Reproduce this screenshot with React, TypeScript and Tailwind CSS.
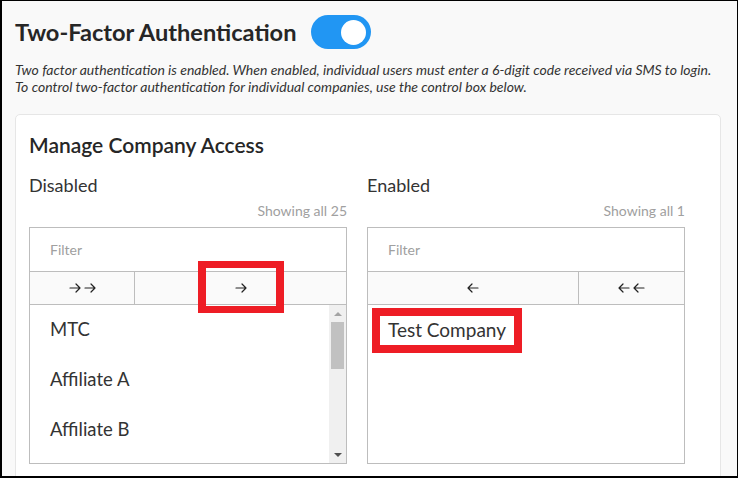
import React from "react";

const Arrow = ({ dir = "right" }: { dir?: "left" | "right" }) => (
  <svg
    width="12"
    height="10"
    viewBox="0 0 12 10"
    fill="none"
    stroke="#222"
    strokeWidth="1.2"
    strokeLinecap="round"
    strokeLinejoin="round"
    className={dir === "left" ? "-scale-x-100" : ""}
  >
    <path d="M1 5h10M7 1l4 4-4 4" />
  </svg>
);

const Scrollbar = () => (
  <div className="flex w-[17px] flex-col items-center bg-[#f0f0f0]">
    <div className="mt-[7px] h-0 w-0 border-x-[4px] border-b-[4px] border-x-transparent border-b-[#a3a3a3]" />
    <div className="mt-[6px] h-[47px] w-[13px] bg-[#c1c1c1]" />
    <div className="flex-1" />
    <div className="mb-[6px] h-0 w-0 border-x-[4px] border-t-[4px] border-x-transparent border-t-[#505050]" />
  </div>
);

const companies = ["MTC", "Affiliate A", "Affiliate B"];

const App = () => {
  return (
    <div
      className="box-border h-[478px] w-[738px] overflow-hidden border-t border-r border-b-2 border-l-2 border-black bg-[#f9f9f9] px-[13px] text-[#333]"
      style={{ fontFamily: "Lato, 'Open Sans', sans-serif" }}
    >
      <div className="mt-[14px] flex items-center gap-[15px]">
        <h1 className="text-[23.6px] leading-[34px] font-bold text-[#262626]">Two-Factor Authentication</h1>
        <div className="flex h-[34px] w-[60px] items-center justify-end rounded-full bg-[#2196f3] pr-[5px]">
          <div className="h-[25px] w-[25px] rounded-full bg-white" />
        </div>
      </div>
      <p className="mt-[12px] text-[14px] leading-[17px] text-[#333] italic">
        Two factor authentication is enabled. When enabled, individual users must enter a 6-digit code received via SMS to login.
        <br />
        To control two-factor authentication for individual companies, use the control box below.
      </p>

      <div className="mt-[19px] mr-[3px] h-[400px] rounded-[5px] border border-[#e6e6e6] bg-white px-[13px] pt-[16px]">
        <h2 className="text-[21px] leading-[28px] font-semibold text-[#262626]">Manage Company Access</h2>

        <div className="mt-[14px] grid grid-cols-[318px_318px] gap-x-[20px]">
          {/* Disabled column */}
          <div>
            <div className="text-[18px] leading-[24px]">Disabled</div>
            <div className="mt-[4px] text-right text-[14px] leading-[20px] text-[#a0a0a0]">Showing all 25</div>
            <div className="mt-[6px] border border-[#bdbdbd]">
              <div className="flex h-[43px] items-center pl-[20px] text-[14px] text-[#a0a0a0]">Filter</div>
              <div className="grid h-[33px] grid-cols-[105px_1fr] border-t border-[#bdbdbd] bg-[#fafafa]">
                <div className="flex items-center justify-center gap-[3px] border-r border-[#bdbdbd]">
                  <Arrow />
                  <Arrow />
                </div>
                <div className="relative flex items-center justify-center">
                  <Arrow />
                  <div className="absolute top-[-11px] left-1/2 h-[52px] w-[86px] -translate-x-1/2 border-x-8 border-y-[7px] border-[#ee1d25]" />
                </div>
              </div>
              <div className="flex h-[159px] border-t border-[#bdbdbd]">
                <div className="flex-1">
                  {companies.map((c) => (
                    <div key={c} className="flex h-[50px] items-center pl-[20px] text-[18.5px]">
                      {c}
                    </div>
                  ))}
                </div>
                <Scrollbar />
              </div>
            </div>
          </div>

          {/* Enabled column */}
          <div>
            <div className="text-[18px] leading-[24px]">Enabled</div>
            <div className="mt-[4px] text-right text-[14px] leading-[20px] text-[#a0a0a0]">Showing all 1</div>
            <div className="mt-[6px] border border-[#bdbdbd]">
              <div className="flex h-[43px] items-center pl-[20px] text-[14px] text-[#a0a0a0]">Filter</div>
              <div className="grid h-[33px] grid-cols-[1fr_105px] border-t border-[#bdbdbd] bg-[#fafafa]">
                <div className="flex items-center justify-center border-r border-[#bdbdbd]">
                  <Arrow dir="left" />
                </div>
                <div className="flex items-center justify-center gap-[3px]">
                  <Arrow dir="left" />
                  <Arrow dir="left" />
                </div>
              </div>
              <div className="h-[159px] border-t border-[#bdbdbd] pt-[3px] pl-[4px]">
                <div className="inline-flex h-[45px] items-center border-8 border-[#ee1d25] px-[8px] text-[19px]">
                  Test Company
                </div>
              </div>
            </div>
          </div>
        </div>
      </div>
    </div>
  );
};

export default App;
